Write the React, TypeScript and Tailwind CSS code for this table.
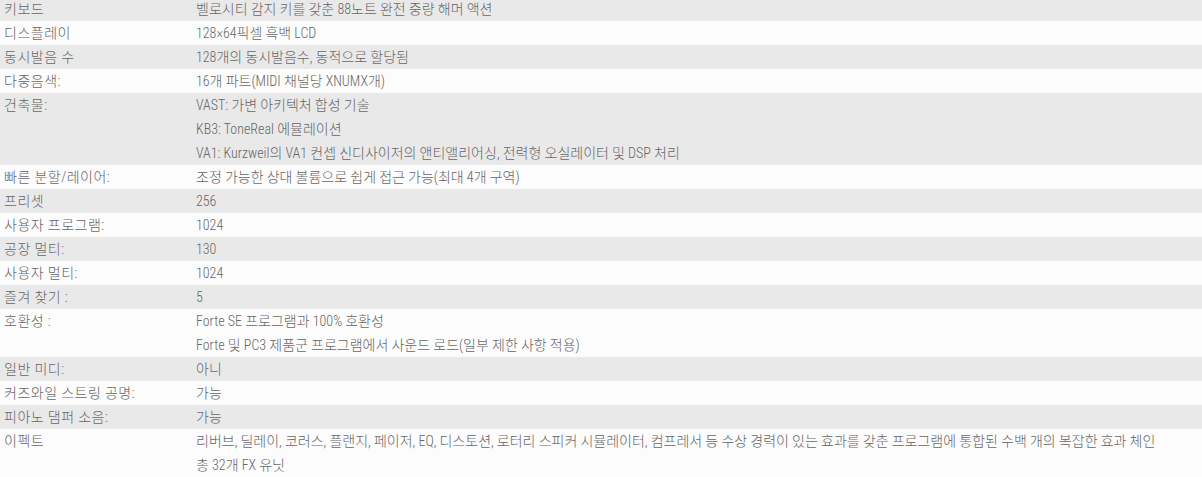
import React from "react";

type Row = { label: string; values: string[] };

const rows: Row[] = [
  { label: "키보드", values: ["벨로시티 감지 키를 갖춘 88노트 완전 중량 해머 액션"] },
  { label: "디스플레이", values: ["128×64픽셀 흑백 LCD"] },
  { label: "동시발음 수", values: ["128개의 동시발음수, 동적으로 할당됨"] },
  { label: "다중음색:", values: ["16개 파트(MIDI 채널당 XNUMX개)"] },
  {
    label: "건축물:",
    values: [
      "VAST: 가변 아키텍처 합성 기술",
      "KB3: ToneReal 에뮬레이션",
      "VA1: Kurzweil의 VA1 컨셉 신디사이저의 앤티앨리어싱, 전력형 오실레이터 및 DSP 처리",
    ],
  },
  { label: "빠른 분할/레이어:", values: ["조정 가능한 상대 볼륨으로 쉽게 접근 가능(최대 4개 구역)"] },
  { label: "프리셋", values: ["256"] },
  { label: "사용자 프로그램:", values: ["1024"] },
  { label: "공장 멀티:", values: ["130"] },
  { label: "사용자 멀티:", values: ["1024"] },
  { label: "즐겨 찾기 :", values: ["5"] },
  {
    label: "호환성 :",
    values: ["Forte SE 프로그램과 100% 호환성", "Forte 및 PC3 제품군 프로그램에서 사운드 로드(일부 제한 사항 적용)"],
  },
  { label: "일반 미디:", values: ["아니"] },
  { label: "커즈와일 스트링 공명:", values: ["가능"] },
  { label: "피아노 댐퍼 소음:", values: ["가능"] },
  {
    label: "이펙트",
    values: [
      "리버브, 딜레이, 코러스, 플랜지, 페이저, EQ, 디스토션, 로터리 스피커 시뮬레이터, 컴프레서 등 수상 경력이 있는 효과를 갖춘 프로그램에 통합된 수백 개의 복잡한 효과 체인",
      "총 32개 FX 유닛",
    ],
  },
];

export default function App() {
  return (
    <div className="w-[1202px] h-[477px] overflow-hidden bg-[#fcfcfc]">
      <div className="-mt-[3px] text-[14px] text-[#666666] font-['Roboto','Noto_Sans_CJK_KR',sans-serif] font-light font-stretch-condensed">
        {rows.map((r, i) => (
          <div key={i} className={`flex ${i % 2 === 0 ? "bg-[#e9e9e9]" : "bg-[#fcfcfc]"}`}>
            <div className="w-[192px] shrink-0 pl-[4px] h-[24px] leading-[24px] tracking-[0.5px]">
              {r.label}
            </div>
            <div className="flex-1 flex flex-col pl-[4px]">
              {r.values.map((v, j) => (
                <div key={j} className="h-[24px] leading-[24px] whitespace-nowrap">
                  {v}
                </div>
              ))}
            </div>
          </div>
        ))}
      </div>
    </div>
  );
}
